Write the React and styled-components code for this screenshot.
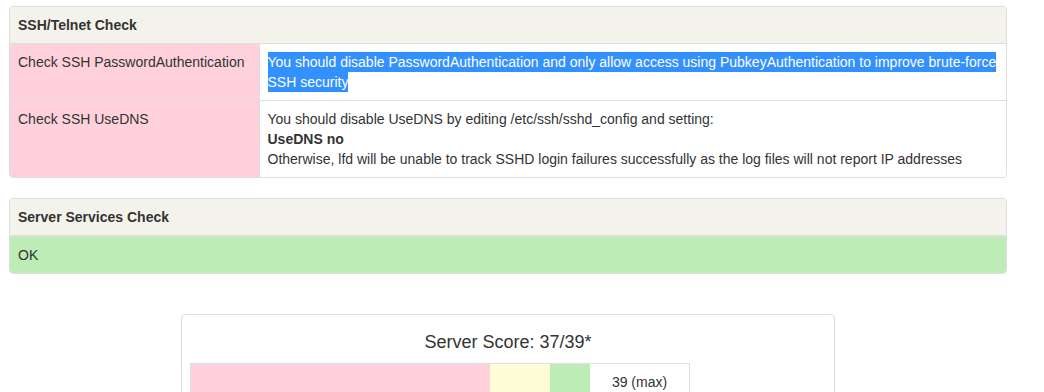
import React from "react";
import styled, { createGlobalStyle } from "styled-components";

const GlobalStyle = createGlobalStyle`
  html, body {
    margin: 0;
    padding: 0;
    background: #fff;
  }
  body {
    font-family: "Liberation Sans", Arial, Helvetica, sans-serif;
    font-size: 14px;
    line-height: 20px;
    color: #333;
  }
`;

const tones = {
  danger: "#ffd1dc",
  warning: "#fffdd8",
  success: "#bdecb6",
  plain: "#ffffff",
};

const Page = styled.div`
  width: 998px;
  padding: 6px 0 0 9px;
`;

const Panel = styled.section`
  border: 1px solid #ddd;
  border-radius: 4px;
  margin-bottom: 20px;
  overflow: hidden;
  background: #fff;
`;

const PanelHeading = styled.div`
  background: #f3f2eb;
  padding: 8px;
  font-weight: bold;
  border-bottom: ${(p) => (p.$thick ? 2 : 1)}px solid #ddd;
`;

const Table = styled.table`
  width: 100%;
  border-collapse: collapse;
  border-spacing: 0;
`;

const Row = styled.tr`
  & + & > td {
    border-top: 1px solid #ddd;
  }
`;

const Cell = styled.td`
  padding: 8px;
  vertical-align: top;
  background: ${(p) => tones[p.$tone || "plain"]};
  width: ${(p) => p.$width || "auto"};
  & + & {
    border-left: 1px solid #ddd;
  }
`;

const Selected = styled.span`
  background: #3390ff;
  color: #fff;
  padding: 2px 0;
  -webkit-box-decoration-break: clone;
  box-decoration-break: clone;
`;

const ScoreBox = styled.div`
  width: 654px;
  margin: 40px auto 0;
  border: 1px solid #ddd;
  border-radius: 4px;
  padding: 17px 8px 8px;
  box-sizing: border-box;
  background: #fff;
`;

const ScoreTitle = styled.div`
  text-align: center;
  font-size: 18px;
  line-height: 20px;
  margin-bottom: 11px;
`;

const ScoreBar = styled.div`
  display: flex;
  width: 500px;
  border: 1px solid #ddd;
  box-sizing: border-box;
`;

const Segment = styled.div`
  width: ${(p) => p.$w}px;
  flex: none;
  background: ${(p) => tones[p.$tone]};
  padding: 8px 0;
  text-align: center;
  min-height: 20px;
`;

export default function App() {
  return (
    <>
      <GlobalStyle />
      <Page>
        <Panel>
          <PanelHeading>SSH/Telnet Check</PanelHeading>
          <Table>
            <tbody>
              <Row>
                <Cell $tone="danger" $width="25%">
                  Check SSH PasswordAuthentication
                </Cell>
                <Cell>
                  <Selected>
                    You should disable PasswordAuthentication and only allow
                    access using PubkeyAuthentication to improve brute-force SSH
                    security
                  </Selected>
                </Cell>
              </Row>
              <Row>
                <Cell $tone="danger" $width="25%">
                  Check SSH UseDNS
                </Cell>
                <Cell>
                  You should disable UseDNS by editing /etc/ssh/sshd_config and
                  setting:
                  <br />
                  <b>UseDNS no</b>
                  <br />
                  Otherwise, lfd will be unable to track SSHD login failures
                  successfully as the log files will not report IP addresses
                </Cell>
              </Row>
            </tbody>
          </Table>
        </Panel>

        <Panel>
          <PanelHeading $thick>Server Services Check</PanelHeading>
          <Table>
            <tbody>
              <Row>
                <Cell $tone="success">OK</Cell>
              </Row>
            </tbody>
          </Table>
        </Panel>

        <ScoreBox>
          <ScoreTitle>Server Score: 37/39*</ScoreTitle>
          <ScoreBar>
            <Segment $tone="danger" $w={299} />
            <Segment $tone="warning" $w={60} />
            <Segment $tone="success" $w={40} />
            <Segment $tone="plain" $w={99}>
              39 (max)
            </Segment>
          </ScoreBar>
        </ScoreBox>
      </Page>
    </>
  );
}
